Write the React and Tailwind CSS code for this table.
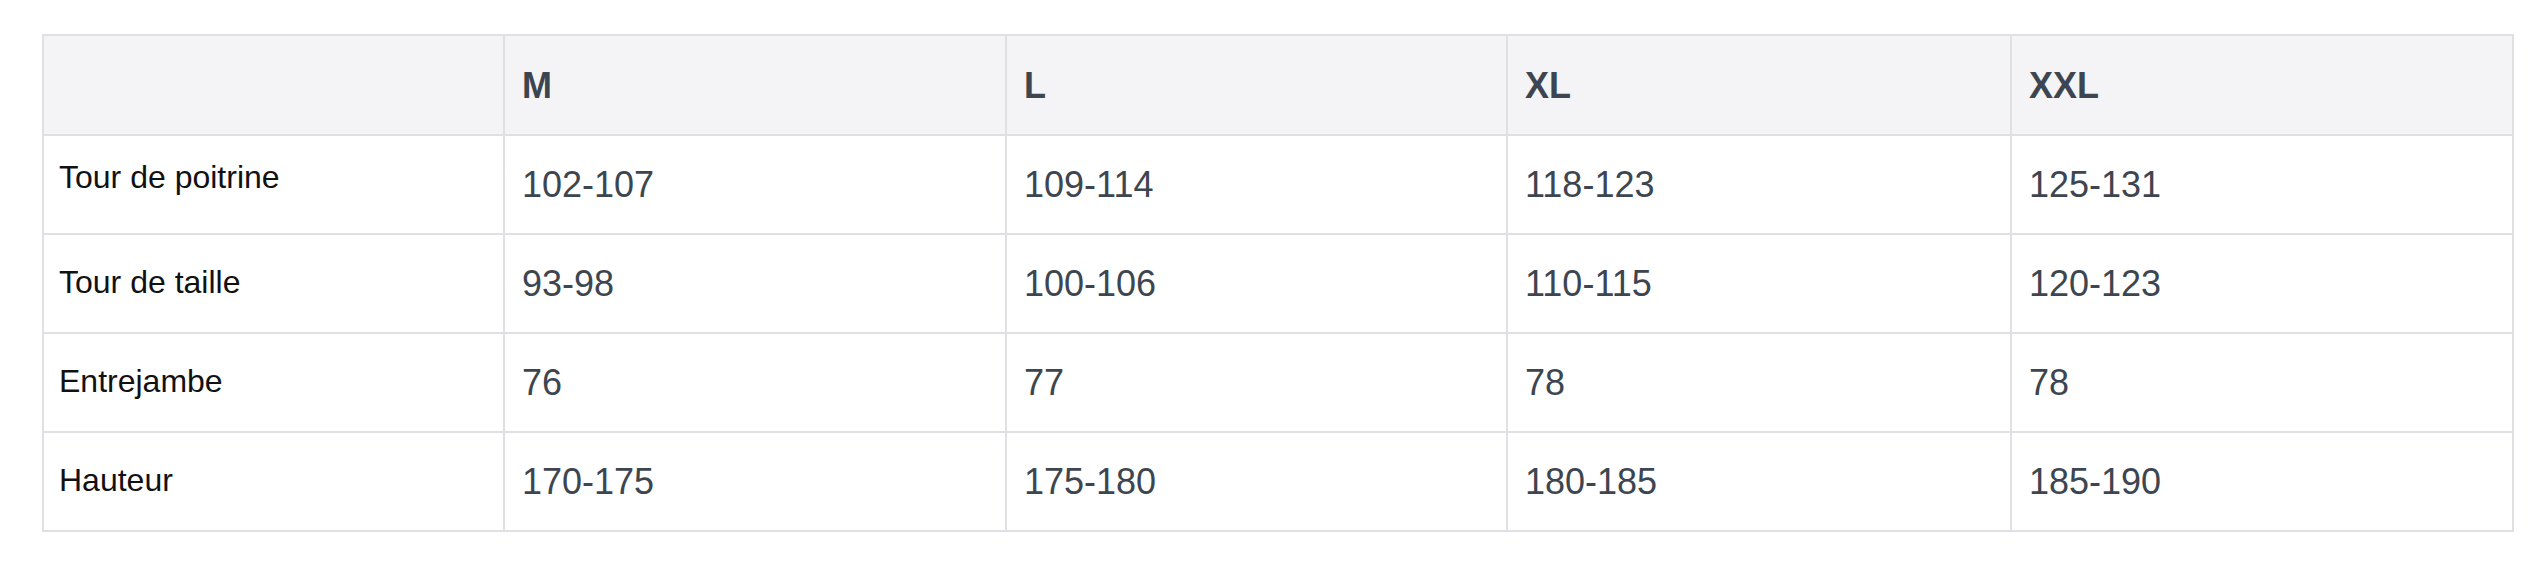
import React from 'react';

const sizes = ['M', 'L', 'XL', 'XXL'];

const rows = [
  { label: 'Tour de poitrine', values: ['102-107', '109-114', '118-123', '125-131'], lift: 'pb-[16px]' },
  { label: 'Tour de taille', values: ['93-98', '100-106', '110-115', '120-123'], lift: 'pb-[4px]' },
  { label: 'Entrejambe', values: ['76', '77', '78', '78'], lift: 'pb-[4px]' },
  { label: 'Hauteur', values: ['170-175', '175-180', '180-185', '185-190'], lift: 'pb-[4px]' },
];

const App = () => {
  return (
    <div className="min-h-screen bg-white pt-[34px] pl-[42px] font-['Liberation_Sans',Arial,sans-serif]">
      <table className="w-[2470px] table-fixed border-collapse border-2 border-[#dfdfe4]">
        <colgroup>
          <col className="w-[461px]" />
          <col className="w-[502px]" />
          <col className="w-[501px]" />
          <col className="w-[504px]" />
          <col className="w-[502px]" />
        </colgroup>
        <thead>
          <tr className="h-[100px] bg-[#f4f4f6]">
            <th className="border-2 border-[#dfdfe4]"></th>
            {sizes.map((size) => (
              <th
                key={size}
                className="border-2 border-[#dfdfe4] pl-[17px] pr-4 pt-[2px] text-left align-middle text-[36px] font-bold text-[#3d4650]"
              >
                {size}
              </th>
            ))}
          </tr>
        </thead>
        <tbody>
          {rows.map((row) => (
            <tr key={row.label} className="h-[99px]">
              <td className={`border-2 border-[#dfdfe4] pl-[15px] pr-4 align-middle text-[32px] text-[#111111] ${row.lift}`}>
                {row.label}
              </td>
              {row.values.map((value, i) => (
                <td
                  key={i}
                  className="border-2 border-[#dfdfe4] pl-[17px] pr-4 align-middle text-[36px] text-[#3d4650]"
                >
                  {value}
                </td>
              ))}
            </tr>
          ))}
        </tbody>
      </table>
    </div>
  );
};

export default App;
